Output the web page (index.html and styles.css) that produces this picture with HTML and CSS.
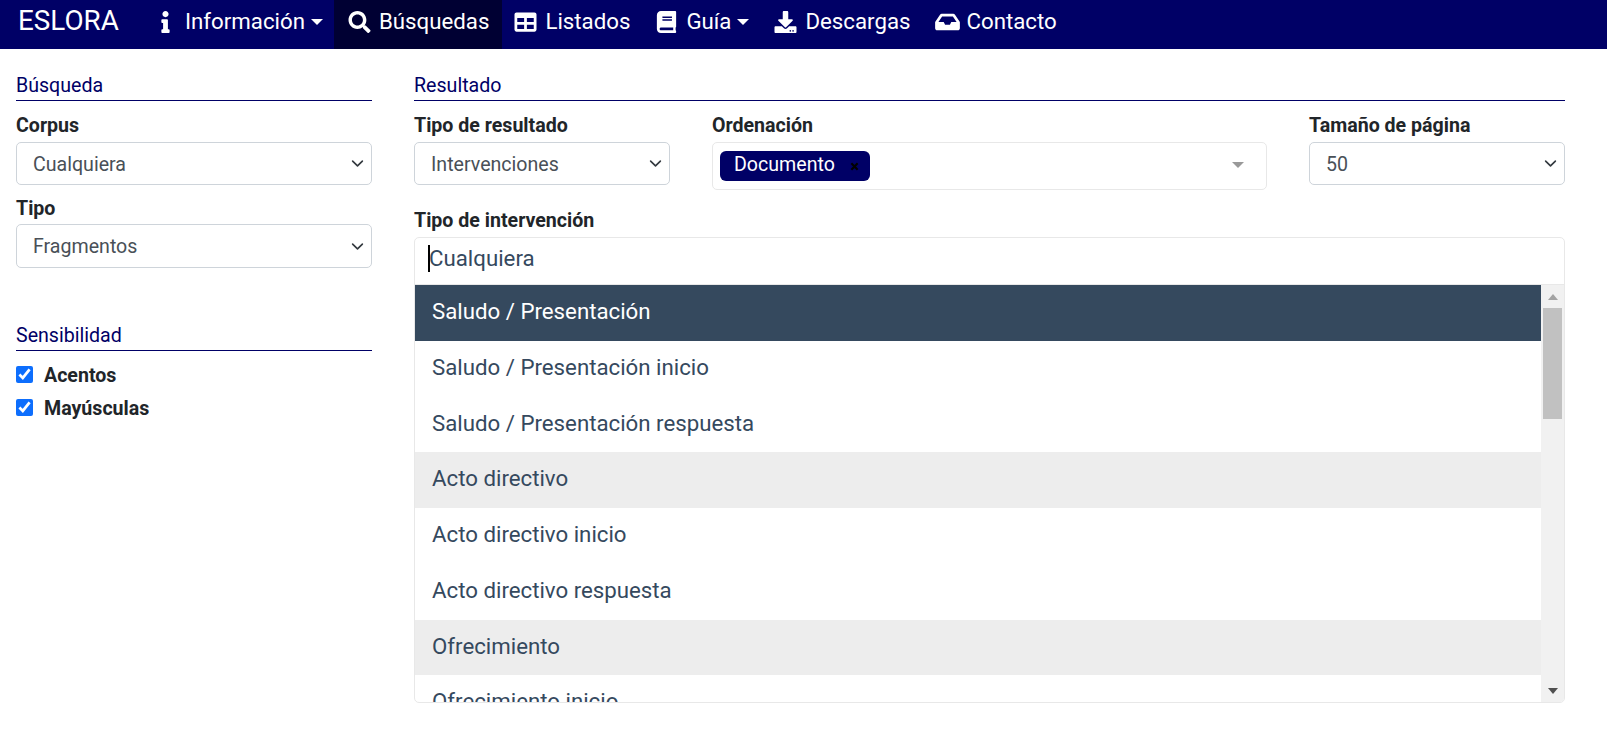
FILE: index.html
```html
<!DOCTYPE html>
<html lang="es">
<head>
    <meta charset="UTF-8">
    <title>ESLORA</title>
    <link rel="stylesheet" href="styles.css">
</head>
<body>
    <nav class="navbar">
        <span class="brand">ESLORA</span>
        <a class="nav-link">
            <svg class="nav-icon" viewBox="0 0 192 512"><path d="M20 424.229h20V279.771H20c-11.046 0-20-8.954-20-20V212c0-11.046 8.954-20 20-20h112c11.046 0 20 8.954 20 20v212.229h20c11.046 0 20 8.954 20 20V492c0 11.046-8.954 20-20 20H20c-11.046 0-20-8.954-20-20v-47.771c0-11.046 8.954-20 20-20zM96 0C56.235 0 24 32.235 24 72s32.235 72 72 72 72-32.235 72-72S135.764 0 96 0z"/></svg>
            Información<span class="nav-caret"></span>
        </a>
        <a class="nav-link active">
            <svg class="nav-icon" viewBox="0 0 512 512"><path d="M505 442.7L405.3 343c-4.5-4.5-10.6-7-17-7H372c27.6-35.3 44-79.7 44-128C416 93.1 322.9 0 208 0S0 93.1 0 208s93.1 208 208 208c48.3 0 92.7-16.4 128-44v16.3c0 6.4 2.5 12.5 7 17l99.7 99.7c9.4 9.4 24.6 9.4 33.9 0l28.3-28.3c9.4-9.4 9.4-24.6.1-34zM208 336c-70.7 0-128-57.2-128-128 0-70.7 57.2-128 128-128 70.7 0 128 57.2 128 128 0 70.7-57.2 128-128 128z"/></svg>
            Búsquedas
        </a>
        <a class="nav-link">
            <svg class="nav-icon" viewBox="0 0 512 512"><path d="M464 32H48C21.49 32 0 53.49 0 80v352c0 26.51 21.49 48 48 48h416c26.51 0 48-21.49 48-48V80c0-26.51-21.49-48-48-48zM224 416H64v-96h160v96zm0-160H64v-96h160v96zm224 160H288v-96h160v96zm0-160H288v-96h160v96z"/></svg>
            Listados
        </a>
        <a class="nav-link">
            <svg class="nav-icon" viewBox="0 0 448 512"><path d="M448 360V24c0-13.3-10.7-24-24-24H96C43 0 0 43 0 96v320c0 53 43 96 96 96h328c13.3 0 24-10.7 24-24v-16c0-7.5-3.5-14.3-8.9-18.7-4.2-15.4-4.2-59.3 0-74.7 5.4-4.3 8.9-11.1 8.9-18.6zM128 134c0-3.3 2.7-6 6-6h212c3.3 0 6 2.7 6 6v20c0 3.3-2.7 6-6 6H134c-3.3 0-6-2.7-6-6v-20zm0 64c0-3.3 2.7-6 6-6h212c3.3 0 6 2.7 6 6v20c0 3.3-2.7 6-6 6H134c-3.3 0-6-2.7-6-6v-20zm253.4 250H96c-17.7 0-32-14.3-32-32 0-17.6 14.4-32 32-32h285.4c-1.9 17.1-1.9 46.9 0 64z"/></svg>
            Guía<span class="nav-caret"></span>
        </a>
        <a class="nav-link">
            <svg class="nav-icon" viewBox="0 0 512 512"><path d="M216 0h80c13.3 0 24 10.7 24 24v168h87.7c17.8 0 26.7 21.5 14.1 34.1L269.7 378.3c-7.5 7.5-19.8 7.5-27.3 0L90.1 226.1c-12.6-12.6-3.7-34.1 14.1-34.1H192V24c0-13.3 10.7-24 24-24zm296 376v112c0 13.3-10.7 24-24 24H24c-13.3 0-24-10.7-24-24V376c0-13.3 10.7-24 24-24h146.7l49 49c20.1 20.1 52.5 20.1 72.6 0l49-49H488c13.3 0 24 10.7 24 24zm-124 88c0-11-9-20-20-20s-20 9-20 20 9 20 20 20 20-9 20-20zm64 0c0-11-9-20-20-20s-20 9-20 20 9 20 20 20 20-9 20-20z"/></svg>
            Descargas
        </a>
        <a class="nav-link">
            <svg class="nav-icon" viewBox="0 0 576 512"><path d="M567.938 243.908L462.25 85.374A48.003 48.003 0 0 0 422.311 64H153.689a48 48 0 0 0-39.938 21.374L8.062 243.908A47.994 47.994 0 0 0 0 270.533V400c0 26.51 21.49 48 48 48h480c26.51 0 48-21.49 48-48V270.533a47.994 47.994 0 0 0-8.062-26.625zM162.252 128h251.497l85.333 128H376l-32 64H232l-32-64H76.918l85.334-128z"/></svg>
            Contacto
        </a>
    </nav>

    <main class="page">
        <aside class="sidebar">
            <h2 class="section-title">Búsqueda</h2>
            <label class="field-label first">Corpus</label>
            <select class="form-select"><option>Cualquiera</option></select>
            <label class="field-label">Tipo</label>
            <select class="form-select tall"><option>Fragmentos</option></select>

            <h2 class="section-title spaced">Sensibilidad</h2>
            <label class="check-row first"><input type="checkbox" checked>Acentos</label>
            <label class="check-row"><input type="checkbox" checked>Mayúsculas</label>
        </aside>

        <section class="results">
            <h2 class="section-title">Resultado</h2>
            <div class="options-row">
                <div>
                    <label class="field-label first">Tipo de resultado</label>
                    <select class="form-select"><option>Intervenciones</option></select>
                </div>
                <div>
                    <label class="field-label first">Ordenación</label>
                    <div class="tag-select">
                        <span class="tag">Documento
                            <svg class="tag-close" viewBox="0 0 10 10"><path d="M1.5 1.5l7 7M8.5 1.5l-7 7"/></svg>
                        </span>
                        <span class="tag-arrow"></span>
                    </div>
                </div>
                <div>
                    <label class="field-label first">Tamaño de página</label>
                    <select class="form-select"><option>50</option></select>
                </div>
            </div>

            <label class="field-label list-label">Tipo de intervención</label>
            <div class="multiselect">
                <div class="search-line"><span class="text-caret"></span>Cualquiera</div>
                <div class="list-wrap">
                    <ul class="option-list">
                        <li class="highlight">Saludo / Presentación</li>
                        <li>Saludo / Presentación inicio</li>
                        <li>Saludo / Presentación respuesta</li>
                        <li class="group">Acto directivo</li>
                        <li>Acto directivo inicio</li>
                        <li>Acto directivo respuesta</li>
                        <li class="group">Ofrecimiento</li>
                        <li>Ofrecimiento inicio</li>
                    </ul>
                    <div class="scrollbar">
                        <span class="scroll-btn"><span class="arrow-up"></span></span>
                        <span class="scroll-thumb"></span>
                        <span class="scroll-track"></span>
                        <span class="scroll-btn"><span class="arrow-down"></span></span>
                    </div>
                </div>
            </div>
        </section>
    </main>
</body>
</html>
```

FILE: styles.css
```css
html, body {
    margin: 0;
    height: 100%;
    overflow: hidden;
}
body {
    font-family: Roboto, "Liberation Sans", sans-serif;
    font-size: 19.6px;
    line-height: 27px;
    color: #212529;
    background: #fff;
}

/* navbar */
.navbar {
    display: flex;
    align-items: stretch;
    height: 49px;
    padding-left: 18px;
    background: #000066;
    color: #fff;
}
.brand {
    width: 122px;
    font-size: 27.8px;
    line-height: 42px;
}
.nav-link {
    display: flex;
    align-items: center;
    padding: 0 11px 6px 13px;
    font-size: 22.25px;
}
.nav-link.active {
    padding-right: 13px;
    margin-right: -2px;
    background: #000033;
}
.nav-icon {
    width: 25px;
    height: 22px;
    margin-right: 7px;
    fill: #fff;
}
.nav-caret {
    width: 0;
    height: 0;
    margin-left: 6px;
    border-top: 6px solid #fff;
    border-left: 6px solid transparent;
    border-right: 6px solid transparent;
}

/* page columns */
.page {
    display: grid;
    grid-template-columns: 356px 1151px;
    column-gap: 42px;
    padding: 23px 0 0 16px;
}
.section-title {
    box-sizing: border-box;
    height: 29px;
    margin: 0;
    font-size: 19.6px;
    font-weight: 400;
    line-height: 27px;
    color: #000066;
    border-bottom: 1px solid #000066;
}
.section-title.spaced {
    margin-top: 54px;
}
.field-label {
    display: block;
    margin: 10px 0 2px;
    font-weight: 700;
}
.field-label.first {
    margin-top: 11px;
    margin-bottom: 3px;
}
.form-select {
    display: block;
    width: 100%;
    height: 43.4px;
    padding: 2px 40px 0 16px;
    font: inherit;
    color: #495057;
    background: #fff url("data:image/svg+xml,%3csvg xmlns='http://www.w3.org/2000/svg' viewBox='0 0 16 16'%3e%3cpath fill='none' stroke='%23343a40' stroke-linecap='round' stroke-linejoin='round' stroke-width='2' d='M2 5l6 6 6-6'/%3e%3c/svg%3e") no-repeat right 6px center / 15px 13px;
    border: 1px solid #ced4da;
    border-radius: 5px;
    appearance: none;
}
.form-select.tall {
    height: 44px;
    padding-top: 0;
}
.check-row {
    display: flex;
    align-items: center;
    margin-top: 6px;
    font-weight: 700;
}
.check-row.first {
    margin-top: 11px;
}
.check-row input {
    width: 17px;
    height: 17px;
    margin: 0 11px 3px 0;
    accent-color: #0d6efd;
}

/* results column */
.options-row {
    display: grid;
    grid-template-columns: 256px 555px 256px;
    column-gap: 42px;
}
.tag-select {
    display: flex;
    align-items: center;
    justify-content: space-between;
    box-sizing: border-box;
    height: 48px;
    padding: 0 22px 1px 7px;
    border: 1px solid #e8e8e8;
    border-radius: 5px;
}
.tag {
    display: flex;
    align-items: center;
    justify-content: space-between;
    box-sizing: border-box;
    width: 150px;
    height: 30px;
    padding: 0 11px 2px 14px;
    color: #fff;
    background: #000066;
    border-radius: 6px;
}
.tag-close {
    width: 9px;
    height: 9px;
    margin-top: 3px;
    fill: none;
    stroke: #000;
    stroke-width: 2.4;
}
.tag-arrow {
    width: 0;
    height: 0;
    margin-bottom: 2px;
    border-top: 6px solid #999;
    border-left: 6px solid transparent;
    border-right: 6px solid transparent;
}
.list-label {
    margin: 17px 0 3px;
}
.multiselect {
    box-sizing: border-box;
    height: 466px;
    border: 1px solid #e8e8e8;
    border-radius: 5px;
    color: #35495e;
    font-size: 22.25px;
    overflow: hidden;
}
.search-line {
    display: flex;
    align-items: center;
    box-sizing: border-box;
    height: 47px;
    padding: 0 0 5px 13px;
    border-bottom: 1px solid #e8e8e8;
}
.text-caret {
    width: 2px;
    height: 27px;
    margin-right: -1px;
    background: #000;
}
.list-wrap {
    display: flex;
    height: 417px;
}
.option-list {
    flex: 1;
    margin: 0;
    padding: 0;
    list-style: none;
    overflow: hidden;
}
.option-list li {
    box-sizing: border-box;
    height: 55.75px;
    padding: 13px 17px;
}
.option-list .highlight {
    color: #fff;
    background: #35495e;
}
.option-list .group {
    background: #ededed;
}

/* scrollbar next to the list */
.scrollbar {
    display: flex;
    flex-direction: column;
    align-items: center;
    width: 23px;
    background: #f1f1f1;
}
.scroll-btn {
    display: flex;
    align-items: center;
    justify-content: center;
    height: 23px;
}
.scroll-thumb {
    width: 19px;
    height: 111px;
    background: #c1c1c1;
}
.scroll-track {
    flex: 1;
}
.arrow-up, .arrow-down {
    width: 0;
    height: 0;
    border-left: 5.5px solid transparent;
    border-right: 5.5px solid transparent;
}
.arrow-up {
    border-bottom: 6px solid #a3a3a3;
}
.arrow-down {
    border-top: 6px solid #505050;
}
```
